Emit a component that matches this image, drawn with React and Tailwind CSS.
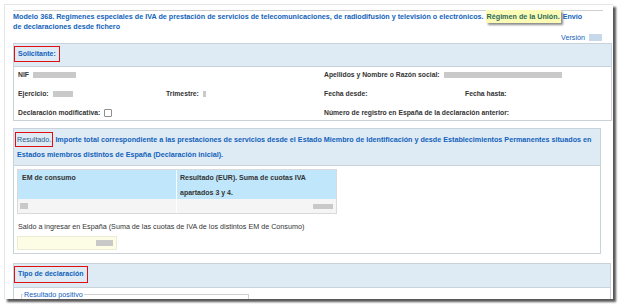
import React from "react";

const Blur = ({ w, h = 6, className = "" }) => (
  <span
    className={`inline-block align-middle bg-[#c9c9c9] blur-[0.6px] ${className}`}
    style={{ width: w, height: h }}
  />
);

export default function App() {
  return (
    <div className="bg-white h-[307px] w-[621px] pt-[4px] pl-[4px] font-['Liberation_Sans',Arial,sans-serif]">
      <div className="w-[609px] h-[295px] overflow-hidden bg-white border-t border-l border-[#e6e6e6] shadow-[3px_3px_2px_rgba(60,60,60,0.85)] text-[6.8px]">
        {/* Title */}
        <div className="ml-[8px] mt-[5px] w-[590px] border-t border-[#cfcfcf] pt-[1px] leading-[10px] font-bold text-[#1162bb] text-[7.2px]">
          Modelo 368. Regimenes especiales de IVA de prestación de servicios de telecomunicaciones, de radiodifusión y televisión o electrónicos.{" "}
          <span className="bg-[#fbfbb6] shadow-[2px_2px_2px_rgba(0,0,0,0.45)] px-[1px] py-[2px] text-[#2c6a58]">Régimen de la Unión.</span>{" "}
          Envío
          <br />
          de declaraciones desde fichero
        </div>
        {/* Version */}
        <div className="flex justify-end items-center h-[9px] mt-[1px] pr-[11px] text-[#1162bb] leading-[9px] text-[7.2px]">
          <span>Versión</span>
          <span className="inline-block ml-[4px] w-[13px] h-[7px] bg-[#c7d8ea] blur-[0.5px]" />
        </div>

        {/* Solicitante */}
        <div className="ml-[8px] mt-[1px] w-[599px] border border-[#cbd3da]">
          <div className="h-[23px] bg-[#dfebf4] border-b border-[#cbd3da] pt-[2px]">
            <div className="inline-flex items-center h-[16px] px-[3px] border border-[#e01010] font-bold text-[#1162bb] text-[7px]">
              Solicitante:
            </div>
          </div>
          <div className="flex flex-col gap-[4px] font-bold text-[#333] pl-[4px] leading-[15px]">
            <div className="h-[15px] flex items-center">
              <div className="w-[306px] flex items-center">
                NIF <Blur w={43} className="ml-[4px]" />
              </div>
              <div className="flex items-center">
                Apellidos y Nombre o Razón social: <Blur w={118} className="ml-[4px]" />
              </div>
            </div>
            <div className="h-[15px] flex items-center">
              <div className="w-[148px] flex items-center">
                Ejercicio: <Blur w={20} className="ml-[4px]" />
              </div>
              <div className="w-[158px] flex items-center">
                Trimestre: <Blur w={3} className="ml-[4px]" />
              </div>
              <div className="w-[141px]">Fecha desde:</div>
              <div>Fecha hasta:</div>
            </div>
            <div className="h-[15px] flex items-center">
              <div className="w-[306px] flex items-center">
                Declaración modificativa:
                <span className="inline-block ml-[4px] w-[8px] h-[8px] border border-[#8e8e8e] rounded-[1px] bg-white" />
              </div>
              <div>Número de registro en España de la declaración anterior:</div>
            </div>
          </div>
        </div>

        {/* Resultado */}
        <div className="ml-[8px] mt-[7px] w-[588px] border border-[#cbd3da] h-[126px]">
          <div className="h-[37px] bg-[#dfebf4] border-b border-[#cbd3da] pt-[3px] pl-[1px] leading-[15px] font-bold text-[#1162bb] text-[7.2px]">
            <span className="inline-block leading-[13px] border border-[#e01010] px-[1px] font-normal text-[#2a5c8c]">Resultado.</span>{" "}
            Importe total correspondiente a las prestaciones de servicios desde el Estado Miembro de Identificación y desde Establecimientos Permanentes situados en
            <br />
            <span className="pl-[2px]">Estados miembros distintos de España (Declaración inicial).</span>
          </div>
          <div className="ml-[3px] mt-[3px] w-[320px] border border-[#dadada]">
            <div className="flex h-[29px] bg-[#bfe6fa] font-bold text-[#333] leading-[15px] text-[7px]">
              <div className="w-[159px] border-r border-white pl-[4px]">EM de consumo</div>
              <div className="pl-[3px]">
                Resultado (EUR). Suma de cuotas IVA
                <br />
                apartados 3 y 4.
              </div>
            </div>
            <div className="flex h-[14px] bg-[#f5f5f5] items-center">
              <div className="w-[159px] border-r border-white h-full flex items-center pl-[2px]">
                <Blur w={8} h={6} />
              </div>
              <div className="flex-1 flex justify-end pr-[3px]">
                <Blur w={20} h={5} />
              </div>
            </div>
          </div>
          <div className="pl-[4px] mt-[8px] leading-[10px] text-[#333] text-[7.2px]">
            Saldo a ingresar en España (Suma de las cuotas de IVA de los distintos EM de Consumo)
          </div>
          <div className="ml-[3px] mt-[4px] w-[100px] h-[14px] bg-[#fdfde6] border border-[#ecebd6] flex items-center justify-end pr-[3px]">
            <Blur w={17} h={6} />
          </div>
        </div>

        {/* Tipo de declaracion */}
        <div className="ml-[8px] mt-[9px] w-[598px] h-[60px] border border-[#cbd3da]">
          <div className="h-[24px] bg-[#dfebf4] border-b border-[#cbd3da] pt-[2px]">
            <div className="inline-flex items-center h-[17px] px-[3px] border border-[#e01010] font-bold text-[#1162bb] text-[7px]">
              Tipo de declaración
            </div>
          </div>
          <div className="ml-[7px] mt-[6px] w-[228px] h-[20px] border border-[#d0d0d0] relative">
            <span className="absolute left-[1px] top-[-5px] bg-white px-[1px] leading-[9px] text-[#1162bb] text-[7.2px]">Resultado positivo</span>
          </div>
        </div>
      </div>
    </div>
  );
}
